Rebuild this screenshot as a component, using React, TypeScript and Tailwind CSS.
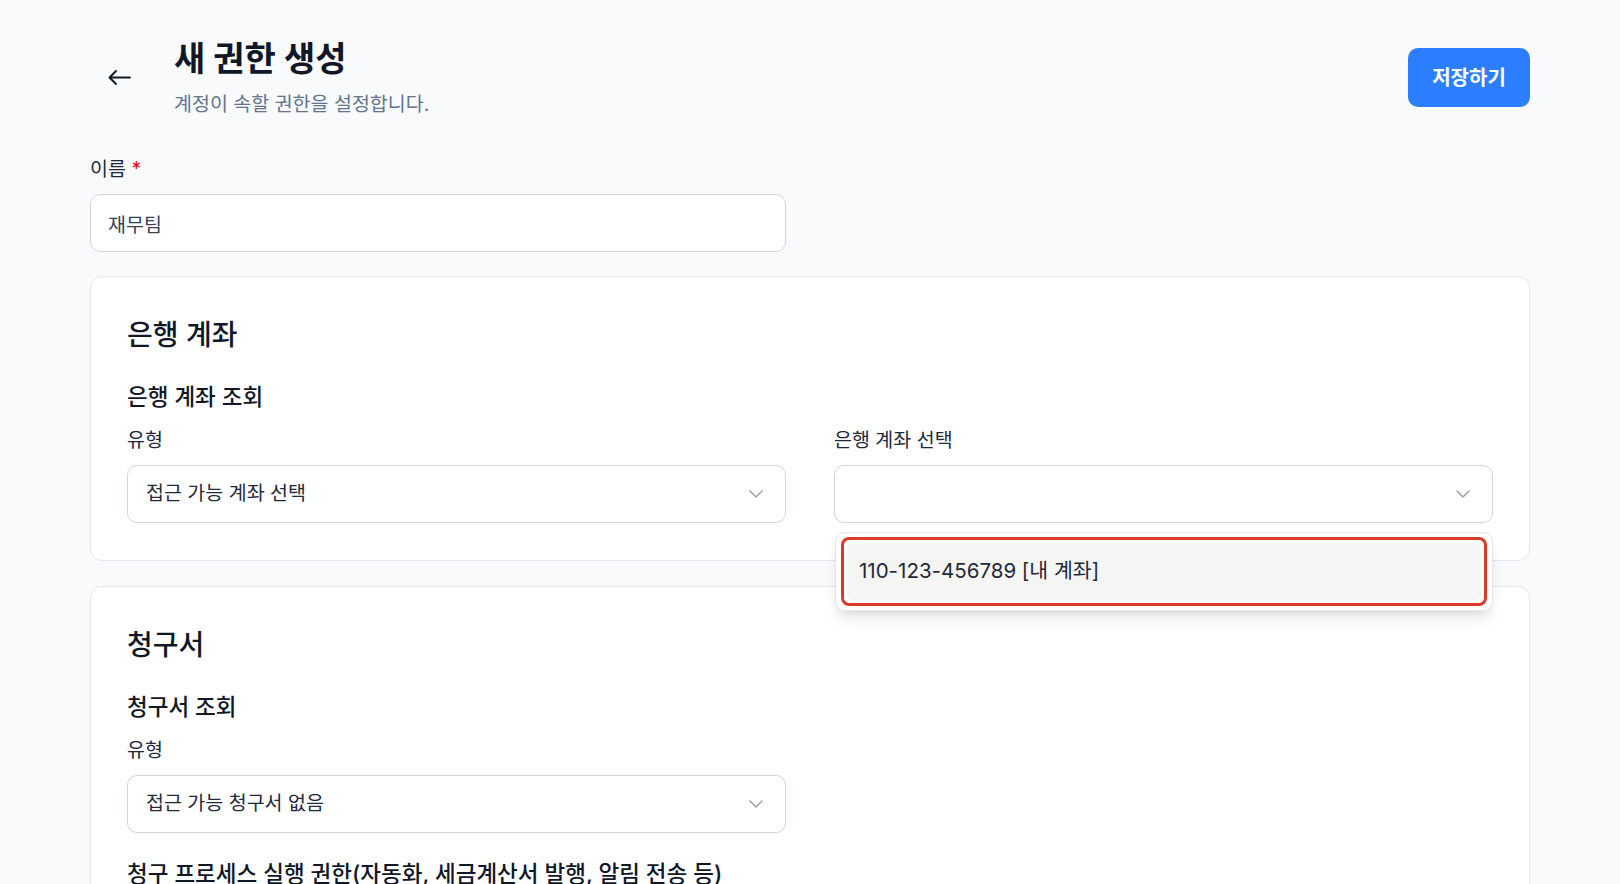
import React from "react";

const font = { fontFamily: 'Inter, "Noto Sans CJK KR", "Noto Sans", sans-serif' };

const Chevron: React.FC = () => (
  <svg width="14" height="8" viewBox="0 0 14 8" fill="none" className="text-gray-400">
    <path d="M1 1l6 6 6-6" stroke="currentColor" strokeWidth="1.5" strokeLinecap="round" strokeLinejoin="round" />
  </svg>
);

const BackArrow: React.FC = () => (
  <svg width="23" height="15" viewBox="0 0 23 15" fill="none" className="text-gray-900">
    <path d="M22 7.5H1.5M8 1L1.5 7.5 8 14" stroke="currentColor" strokeWidth="1.9" strokeLinecap="round" strokeLinejoin="round" />
  </svg>
);

const Select: React.FC<{ value?: string; children?: React.ReactNode }> = ({ value, children }) => (
  <div className="relative">
    <div className="flex h-[58px] items-center justify-between rounded-[10px] border border-gray-300 bg-white pl-[18px] pr-[22px]">
      <span className="text-[19.5px] text-gray-800">{value}</span>
      <Chevron />
    </div>
    {children}
  </div>
);

const Field: React.FC<{ label: string; children: React.ReactNode }> = ({ label, children }) => (
  <div className="flex flex-col gap-[11px]">
    <label className="text-[19.5px] leading-[28px] text-gray-800">{label}</label>
    {children}
  </div>
);

const App: React.FC = () => {
  return (
    <div className="min-h-screen bg-slate-50" style={font}>
      <div className="mx-auto max-w-[1440px] pt-[39px]">
        {/* Header */}
        <div className="flex items-center justify-between">
          <div className="flex items-center">
            <button className="-mt-[3px] ml-[18px] mr-[43px] flex items-center">
              <BackArrow />
            </button>
            <div className="flex flex-col gap-[11px]">
              <h1 className="text-[34px] font-bold leading-[40px] text-gray-900">새 권한 생성</h1>
              <p className="text-[19.5px] leading-[28px] text-slate-500">계정이 속할 권한을 설정합니다.</p>
            </div>
          </div>
          <button className="-mt-[2px] h-[59px] w-[122px] rounded-[10px] bg-blue-500 text-[20px] font-semibold text-white">
            저장하기
          </button>
        </div>

        {/* Name */}
        <div className="mt-[37px] grid grid-cols-2 gap-12">
          <div className="flex flex-col gap-[11px]">
            <label className="text-[19.5px] leading-[28px] text-gray-800">
              이름 <span className="text-red-600">*</span>
            </label>
            <input
              defaultValue="재무팀"
              className="h-[58px] rounded-[10px] border border-gray-300 bg-white px-[17px] text-[19.5px] text-gray-700 outline-none"
            />
          </div>
        </div>

        <div className="mt-[24px] flex flex-col gap-[25px]">
          {/* 은행 계좌 */}
          <section className="rounded-[12px] border border-gray-200 bg-white px-9 pb-[37px] pt-[40px]">
            <h2 className="text-[28px] font-medium leading-[36px] text-gray-900">은행 계좌</h2>
            <h3 className="mt-[29px] text-[22.5px] font-medium leading-[30px] text-gray-900">은행 계좌 조회</h3>
            <div className="mt-[14px] grid grid-cols-2 gap-12">
              <Field label="유형">
                <Select value="접근 가능 계좌 선택" />
              </Field>
              <Field label="은행 계좌 선택">
                <Select>
                  <div className="absolute left-px right-0 top-[calc(100%+9px)] z-10 rounded-[10px] border border-gray-200 bg-white px-[5px] py-[4px] shadow-lg">
                    <div className="rounded-[8px] border-[3px] border-[#dc3b2c] p-[3px]">
                      <div className="flex h-[57px] items-center rounded-[6px] bg-stone-100 px-3 text-[20.5px] text-gray-800">
                        110-123-456789 [내 계좌]
                      </div>
                    </div>
                  </div>
                </Select>
              </Field>
            </div>
          </section>

          {/* 청구서 */}
          <section className="rounded-[12px] border border-gray-200 bg-white px-9 pb-[37px] pt-[40px]">
            <h2 className="text-[28px] font-medium leading-[36px] text-gray-900">청구서</h2>
            <h3 className="mt-[29px] text-[22.5px] font-medium leading-[30px] text-gray-900">청구서 조회</h3>
            <div className="mt-[14px] grid grid-cols-2 gap-12">
              <Field label="유형">
                <Select value="접근 가능 청구서 없음" />
              </Field>
            </div>
            <h3 className="mt-[26px] text-[22.5px] font-medium leading-[30px] text-gray-900">
              청구 프로세스 실행 권한(자동화, 세금계산서 발행, 알림 전송 등)
            </h3>
            <div className="mt-[14px] grid grid-cols-2 gap-12">
              <Field label="유형">
                <Select value="실행 권한 없음" />
              </Field>
            </div>
          </section>
        </div>
      </div>
    </div>
  );
};

export default App;
